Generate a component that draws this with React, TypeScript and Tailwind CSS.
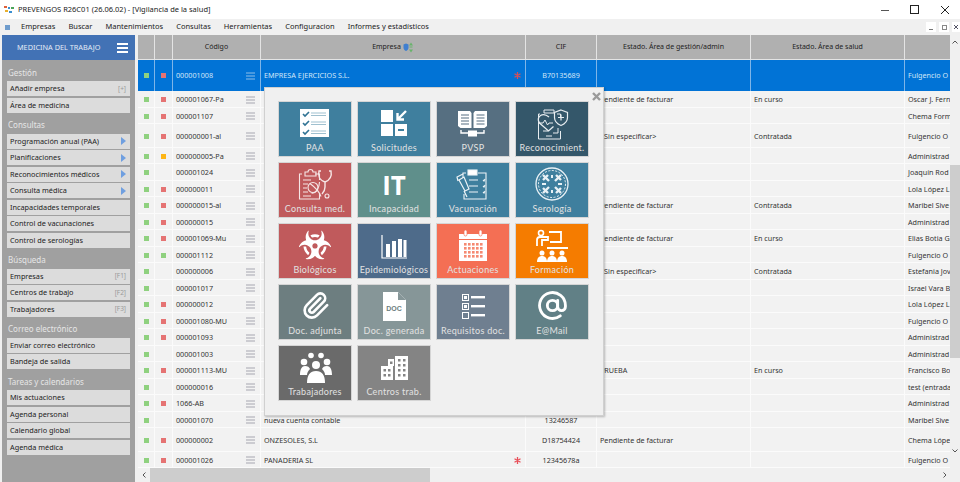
import { AtSign, Paperclip } from 'lucide-react'
import { FaBiohazard } from 'react-icons/fa'
import type { ReactNode } from 'react'

const W = '#ffffff'

const Svg = ({ children }: { children: ReactNode }) => (
  <svg width="72" height="38" viewBox="0 0 72 38" className="block">{children}</svg>
)

const icons: Record<string, ReactNode> = {
  paa: (
    <Svg>
      <rect x="21" y="7" width="29" height="28" fill={W} />
      {[12, 21, 30].map(y => (
        <g key={y}>
          <path d={`M24 ${y}l2 2 4-4`} stroke="#2f7394" strokeWidth="1.6" fill="none" />
          <path d={`M32 ${y - 1}h15M32 ${y + 1.5}h15`} stroke="#9fc0cf" strokeWidth="1" />
        </g>
      ))}
    </Svg>
  ),
  sol: (
    <Svg>
      <rect x="23" y="8" width="12" height="12" fill={W} />
      <rect x="23" y="22" width="12" height="12" fill={W} />
      <rect x="37" y="22" width="12" height="12" fill={W} />
      <rect x="40" y="27" width="6" height="2" fill="#3d7f9e" />
      <path d="M48 9l-8 8M39.5 11v6.5H46" stroke={W} strokeWidth="2.4" fill="none" />
    </Svg>
  ),
  pvsp: (
    <Svg>
      <path d="M21 9h12l1.500 2v15h-11l-2.500-2zM36.500 11l1.500-2h12v15l-2.500 2h-11z" fill={W} />
      <path d="M24 13h8M24 16h8M24 19h8M24 22h8M39.500 13h8M39.500 16h8M39.500 19h8M39.500 22h8" stroke="#566f81" strokeWidth="1.100" />
      <path d="M24 28v3h7M47 28v3h-7" stroke={W} strokeWidth="1.400" fill="none" />
      <rect x="31" y="28.500" width="9" height="6" fill={W} />
    </Svg>
  ),
  rec: (
    <Svg>
      <g stroke="#e8edf0" strokeWidth="1" fill="none">
        <path d="M24 12h-1.500v25h22v-8M41 12h3.500v3" />
        <path d="M28 11v-3h10v3z" />
        <path d="M30 34h6M27 29h5M37 31h5v-5" />
        <path d="M33 15c-3-2.500-6-3-8.500-1.500-2.500 1.700-3 5-1 7.500l9 8 5-4.500" strokeWidth="1.300" />
        <path d="M22 21h5l2-3 2.500 5 1.500-2h4" />
        <path d="M45 8l6.500 2.500v5c0 4-3 6.500-6.500 8-3.500-1.500-6.500-4-6.500-8v-5z" strokeWidth="1.200" />
        <path d="M45 12.500v6M42 15.500h6" strokeWidth="1.200" />
      </g>
    </Svg>
  ),
  con: (
    <Svg>
      <g stroke="#f6e6e6" strokeWidth="1.100" fill="none">
        <path d="M23 11h-2.500v25h20v-6M36 11h4.500v6" />
        <path d="M26 13v-4h3a2 2 0 0 1 5 0h3v4z" />
        <path d="M24 17h8M24 21h5M24 25h4M24 29h5M24 33h8" />
        <circle cx="34" cy="24.500" r="5" />
        <path d="M32.500 30c4 1 8-5 8-11M31 20.500c4 3 9 7 11 13" />
        <circle cx="48" cy="33" r="2" />
        <path d="M42 8h-2c-1 4 0 9 6 11 5-2 7-6 6-11h-2M46 19v5c0 3-1 5-3 7" strokeWidth="1.400" />
      </g>
    </Svg>
  ),
  vac: (
    <Svg>
      <g stroke="#eef4f7" strokeWidth="1.100" fill="none">
        <path d="M29 10h-3v5M41 10h8v26H27v-5" />
        <rect x="31" y="7" width="9" height="5" fill={W} />
        <path d="M32 17h9M46 17l1 1 1-2M32 23h9M46 23l1 1 1-2M32 29h9M46 29l1 1 1-2" />
        <path d="M22 17l5-3 5 12-4 2zM27 28l3 6M21 18l-1-4 6-3" strokeWidth="1.200" />
      </g>
    </Svg>
  ),
  ser: (
    <Svg>
      <g stroke="#e9f1f5" fill="none">
        <circle cx="36" cy="21" r="16" strokeWidth="1.300" />
        <circle cx="36" cy="21" r="13.500" strokeWidth="1" strokeDasharray="2 1.500" />
        <path d="M27 12l6 6M32 12l-5 5M45 12l-6 6M40 12l5 5M27 30l6-6M32 30l-5-5M45 30l-6-6M40 30l5-5" strokeWidth="2.400" />
        <path d="M26 21h4M42 21h4M36 12v3M36 27v3" strokeWidth="2" />
      </g>
    </Svg>
  ),
  epi: (
    <Svg>
      <path d="M24 11v23h25" stroke={W} strokeWidth="1.200" fill="none" />
      <rect x="28" y="20" width="4" height="13" fill={W} />
      <rect x="34" y="17" width="4" height="16" fill={W} />
      <rect x="40" y="15" width="4" height="18" fill={W} />
      <rect x="45.500" y="16" width="3" height="17" fill={W} />
    </Svg>
  ),
  act: (
    <Svg>
      <path d="M22 10h28v27H22z" fill={W} />
      <rect x="22" y="15" width="28" height="1" fill="#f46f54" />
      <rect x="27" y="6" width="3" height="6" rx="1.500" fill={W} stroke="#f46f54" strokeWidth=".7" />
      <rect x="42" y="6" width="3" height="6" rx="1.500" fill={W} stroke="#f46f54" strokeWidth=".7" />
      {[19, 23, 27, 31].map(y =>
        [27, 31, 35, 39, 43].map(x => <rect key={`${x}-${y}`} x={x} y={y} width="2.600" height="2.600" fill="#f58a72" />)
      )}
    </Svg>
  ),
  for: (
    <Svg>
      <g fill="none" stroke={W}>
        <circle cx="25" cy="9" r="2.500" strokeWidth="1.600" />
        <path d="M21 22v-6c0-2 1-3 3-3h8v3h-6v6M33 8h12v10h-11M52 24H31" strokeWidth="1.800" />
      </g>
      {[26, 36, 46].map(x => (
        <g key={x} fill={W}>
          <circle cx={x} cy="29" r="2.500" />
          <path d={`M${x - 5} 38c0-4 2-6 5-6s5 2 5 6z`} />
        </g>
      ))}
    </Svg>
  ),
  gen: (
    <Svg>
      <path d="M25 7h15l8 8v21H25z" fill={W} />
      <path d="M40 7l8 8h-8z" fill="#869698" />
    </Svg>
  ),
  req: (
    <Svg>
      {[9, 18, 27].map((y, i) => (
        <g key={y}>
          <rect x="25.500" y={y + 0.500} width="6" height="6" fill="none" stroke={W} />
          {i < 2 && <rect x="27" y={y + 2} width="3" height="3" fill={W} />}
          <rect x="34" y={y + 2} width="14" height="2.400" fill={W} />
        </g>
      ))}
    </Svg>
  ),
  tra: (
    <Svg>
      <g fill={W}>
        <circle cx="32" cy="9.500" r="2.800" />
        <circle cx="42" cy="9.500" r="2.800" />
        <circle cx="25" cy="16" r="3.300" />
        <circle cx="48" cy="16" r="3.300" />
        <circle cx="37" cy="19" r="4" />
        <path d="M21 29c0-6 2-9 5-9 3 0 4 1 5 3-2 2-3 4-3 6zM53 29c0-6-2-9-5-9-3 0-4 1-5 3 2 2 3 4 3 6zM28 37c0-8 3-12 9-12s9 4 9 12z" />
      </g>
    </Svg>
  ),
  cen: (
    <Svg>
      <rect x="23" y="20" width="12" height="14" fill={W} />
      <rect x="30" y="13" width="6" height="7" fill={W} />
      <rect x="37" y="10" width="13" height="24" fill={W} />
      {[13, 18, 23, 28].map(y => (
        <g key={y} fill="#848484">
          <rect x="40" y={y} width="2.500" height="2.500" />
          <rect x="45" y={y} width="2.500" height="2.500" />
        </g>
      ))}
      {[23, 28].map(y => (
        <g key={y} fill="#848484">
          <rect x="25.500" y={y} width="2.500" height="2.500" />
          <rect x="30" y={y} width="2.500" height="2.500" />
        </g>
      ))}
      <rect x="32" y="15.500" width="2.500" height="2.500" fill="#848484" />
    </Svg>
  ),
}

const tiles = [
  { label: 'PAA', bg: 'bg-[#3f7f9e]', icon: icons.paa },
  { label: 'Solicitudes', bg: 'bg-[#3f7f9e]', icon: icons.sol },
  { label: 'PVSP', bg: 'bg-[#566f81]', icon: icons.pvsp },
  { label: 'Reconocimient.', bg: 'bg-[#34576a]', icon: icons.rec },
  { label: 'Consulta med.', bg: 'bg-[#c05a5c]', icon: icons.con },
  {
    label: 'Incapacidad',
    bg: 'bg-[#5f8f8b]',
    icon: <div className="h-[38px] pt-[7px] text-center text-[26px] leading-[30px] font-bold text-white font-['Open_Sans',sans-serif]">IT</div>,
  },
  { label: 'Vacunación', bg: 'bg-[#3f7f9e]', icon: icons.vac },
  { label: 'Serología', bg: 'bg-[#3f7f9e]', icon: icons.ser },
  {
    label: 'Biológicos',
    bg: 'bg-[#c05a5c]',
    icon: <div className="flex h-[38px] justify-center pt-[5px] text-white"><FaBiohazard size={32} /></div>,
  },
  { label: 'Epidemiológicos', bg: 'bg-[#4e6b8a]', icon: icons.epi },
  { label: 'Actuaciones', bg: 'bg-[#f46f54]', icon: icons.act },
  { label: 'Formación', bg: 'bg-[#f57c00]', icon: icons.for },
  {
    label: 'Doc. adjunta',
    bg: 'bg-[#6d7e80]',
    icon: <div className="flex h-[38px] justify-center pt-[6px] text-white"><Paperclip size={29} strokeWidth={2.2} /></div>,
  },
  {
    label: 'Doc. generada',
    bg: 'bg-[#869698]',
    icon: (
      <div className="relative h-[38px]">
        {icons.gen}
        <span className="absolute top-[20px] left-0 w-full text-center text-[7px] leading-[8px] font-bold text-[#6d7e80] font-['Liberation_Sans',sans-serif]">DOC</span>
      </div>
    ),
  },
  { label: 'Requisitos doc.', bg: 'bg-[#6f7f90]', icon: icons.req },
  {
    label: 'E@Mail',
    bg: 'bg-[#618086]',
    icon: <div className="flex h-[38px] justify-center pt-[5px] text-white"><AtSign size={31} strokeWidth={2.2} /></div>,
  },
  { label: 'Trabajadores', bg: 'bg-[#6a6a6a]', icon: icons.tra },
  { label: 'Centros trab.', bg: 'bg-[#848484]', icon: icons.cen },
]

type Row = { code: string; c2?: string; name?: string; star?: boolean; cif?: string; e1?: string; e2?: string; user: string; tall?: boolean }

const PEND = 'Pendiente de facturar'
const SIN = '<Sin especificar>'
const RED = 'bg-[#e57373]'
const GREEN = 'bg-[#8fd17f]'
const ORANGE = 'bg-[#fdb515]'

const rows: Row[] = [
  { code: '000001067-Pa', c2: RED, e1: PEND, e2: 'En curso', user: 'Oscar J. Fern' },
  { code: '000001107', c2: RED, user: 'Chema Form' },
  { code: '000000001-al', c2: RED, e1: SIN, e2: 'Contratada', user: 'Fulgencio O', tall: true },
  { code: '000000005-Pa', c2: ORANGE, user: 'Administrad' },
  { code: '000001024', user: 'Joaquín Rod' },
  { code: '000000011', c2: RED, user: 'Lola López L' },
  { code: '000000015-al', c2: RED, e1: PEND, e2: 'Contratada', user: 'Maribel Sive' },
  { code: '000000015', c2: RED, user: 'Administrad' },
  { code: '000001069-Mu', c2: RED, e1: PEND, e2: 'En curso', user: 'Elias Botia G' },
  { code: '000001112', c2: GREEN, user: 'Fulgencio O' },
  { code: '000000006', e1: SIN, e2: 'Contratada', user: 'Estefania Jov' },
  { code: '000001017', user: 'Israel Vara B' },
  { code: '000000012', c2: RED, user: 'Lola López L' },
  { code: '000001080-MU', c2: RED, user: 'Fulgencio O' },
  { code: '000001093', c2: RED, user: 'Administrad' },
  { code: '000001003', user: 'Administrad' },
  { code: '000001113-MU', c2: RED, e1: 'PRUEBA', e2: 'En curso', user: 'Francisco Bo' },
  { code: '000000016', user: 'test (entrada' },
  { code: '1066-AB', c2: RED, user: 'Administrad' },
  { code: '000001070', name: 'nueva cuenta contable', cif: '13246587', user: 'Maribel Sive' },
  { code: '000000002', c2: RED, name: 'ONZESOLES, S.L', cif: 'D18754424', e1: PEND, user: 'Chema Lópe', tall: true },
  { code: '000001026', c2: RED, name: 'PANADERIA SL', star: true, cif: '12345678a', user: 'Fulgencio O' },
]

const Lines = ({ color }: { color: string }) => (
  <svg width="9" height="8" viewBox="0 0 9 8" className="shrink-0">
    <path d="M0 1h9M0 4h9M0 7h9" stroke={color} strokeWidth="1" />
  </svg>
)

const Star = ({ color }: { color: string }) => (
  <svg width="7" height="7" viewBox="0 0 7 7" className="shrink-0">
    <path d="M3.500 0v7M0.500 1.700l6 3.600M6.500 1.700l-6 3.600" stroke={color} strokeWidth="1.300" />
  </svg>
)

const Sq = ({ color }: { color?: string }) => (color ? <div className={`h-[5px] w-[5px] ${color}`} /> : null)

const sideGroups = [
  { title: 'Gestión', items: [['Añadir empresa', '[+]'], ['Área de medicina']] },
  {
    title: 'Consultas',
    items: [['Programación anual (PAA)', '>'], ['Planificaciones', '>'], ['Reconocimientos médicos', '>'], ['Consulta médica', '>'], ['Incapacidades temporales'], ['Control de vacunaciones'], ['Control de serologías']],
  },
  { title: 'Búsqueda', items: [['Empresas', '[F1]'], ['Centros de trabajo', '[F2]'], ['Trabajadores', '[F3]']] },
  { title: 'Correo electrónico', items: [['Enviar correo electrónico'], ['Bandeja de salida']] },
  { title: 'Tareas y calendarios', items: [['Mis actuaciones'], ['Agenda personal'], ['Calendario global'], ['Agenda médica']] },
]

function Sidebar() {
  return (
    <aside className="ml-[2px] w-[133px] shrink-0 bg-[#a0a0a0]">
      <div className="flex h-[25px] items-center justify-between bg-[#4272b5] pr-[7px] pl-[15px] text-[7.300px] whitespace-nowrap text-[#e4ecf6]">
        MEDICINA DEL TRABAJO
        <svg width="11" height="10" viewBox="0 0 11 10"><path d="M0 1h11M0 5h11M0 9h11" stroke="#ffffff" strokeWidth="2" /></svg>
      </div>
      {sideGroups.map(g => (
        <section key={g.title} className="px-[5px]">
          <h3 className="mt-[5.5px] mb-[2.5px] h-[13px] pl-[1px] text-[8px] leading-[13px] text-[#e6e6e6]">{g.title}</h3>
          <div className="flex flex-col gap-[1.5px]">
            {g.items.map(([label, hint]) => (
              <div key={label} className="flex h-[15px] items-center justify-between bg-[#dcdcdc] pr-[4px] pl-[3px] text-[7.300px] text-[#222]">
                {label}
                {hint === '>' ? (
                  <svg width="5" height="8" viewBox="0 0 5 8"><path d="M0 0l5 4-5 4z" fill="#6f9fe0" /></svg>
                ) : hint ? (
                  <span className="text-[6.500px] text-[#999]">{hint}</span>
                ) : null}
              </div>
            ))}
          </div>
        </section>
      ))}
    </aside>
  )
}

const HeadCell = ({ w, children }: { w: string; children?: ReactNode }) => (
  <div className={`flex h-full shrink-0 items-center justify-center border-r border-[#e4e4e4] text-[7px] text-[#222] ${w}`}>{children}</div>
)

function Table() {
  return (
    <div className="relative ml-[3px] flex min-w-0 flex-1 flex-col">
      <div className="flex min-h-0 flex-1">
        <div className="min-w-0 flex-1 overflow-hidden">
          <div className="flex h-[25px] w-[812px] border-b border-[#e4e4e4] bg-[#b0b0b0]">
            <HeadCell w="w-[17px]" />
            <HeadCell w="w-[18px]" />
            <HeadCell w="w-[88px]">Código</HeadCell>
            <HeadCell w="w-[265px]">
              Empresa
              <svg width="11" height="11" viewBox="0 0 11 11" className="ml-[2px]">
                <path d="M0.500 2.500l2.500-1 2.500 1v3c0 2-1.200 3-2.500 3.500-1.300-.5-2.500-1.500-2.500-3.500z" fill="#3f7fd0" />
                <path d="M8 0.500l2 3H6zM6.500 4.500h3v1h-3zM8 10.500l-2-3h4z" fill="#68b36b" />
              </svg>
            </HeadCell>
            <HeadCell w="w-[71px]">CIF</HeadCell>
            <HeadCell w="w-[154px]">Estado. Área de gestión/admin</HeadCell>
            <HeadCell w="w-[154px]">Estado. Área de salud</HeadCell>
            <div className="flex-1" />
          </div>
          <div className="flex h-[31px] w-[812px] items-center bg-[#0173d6] text-[7.200px] text-[#d3e6f8]">
            <div className="flex h-full w-[17px] shrink-0 items-center justify-center border-r border-[#7fb5e8]"><Sq color={GREEN} /></div>
            <div className="flex h-full w-[18px] shrink-0 items-center justify-center border-r border-[#7fb5e8]"><Sq color={RED} /></div>
            <div className="flex h-full w-[88px] shrink-0 items-center justify-between border-r border-[#7fb5e8] pr-[5px] pl-[3px]">000001008<Lines color="#8fbfe8" /></div>
            <div className="flex h-full w-[265px] shrink-0 items-center justify-between border-r border-[#7fb5e8] pr-[4px] pl-[3px]">EMPRESA EJERCICIOS S.L.<Star color="#d4505a" /></div>
            <div className="flex h-full w-[71px] shrink-0 items-center justify-center border-r border-[#7fb5e8]">B70135689</div>
            <div className="h-full w-[154px] shrink-0 border-r border-[#7fb5e8]" />
            <div className="h-full w-[154px] shrink-0 border-r border-[#7fb5e8]" />
            <div className="min-w-0 flex-1 overflow-hidden pl-[3px] whitespace-nowrap">Fulgencio O</div>
          </div>
          {rows.map(r => (
            <div key={r.code + r.user} className={`flex w-[812px] items-center border-b border-[#fbfbfb] bg-[#f2f2f2] text-[7.200px] text-[#333] ${r.tall ? 'h-[23.5px]' : 'h-[16.5px]'}`}>
              <div className="flex h-full w-[17px] shrink-0 items-center justify-center border-r border-[#fbfbfb] pt-[2px]"><Sq color={GREEN} /></div>
              <div className="flex h-full w-[18px] shrink-0 items-center justify-center border-r border-[#fbfbfb] pt-[2px]"><Sq color={r.c2} /></div>
              <div className="flex h-full w-[88px] shrink-0 items-center justify-between border-r border-[#fbfbfb] pt-[2px] pr-[5px] pl-[3px]">{r.code}<Lines color="#a6a6b0" /></div>
              <div className="flex h-full w-[265px] shrink-0 items-center justify-between border-r border-[#fbfbfb] pt-[2px] pr-[4px] pl-[3px]">{r.name}{r.star && <Star color="#e8505a" />}</div>
              <div className="flex h-full w-[71px] shrink-0 items-center justify-center border-r border-[#fbfbfb] pt-[2px]">{r.cif}</div>
              <div className="flex h-full w-[154px] shrink-0 items-center border-r border-[#fbfbfb] pt-[2px] pl-[3px]">{r.e1}</div>
              <div className="flex h-full w-[154px] shrink-0 items-center border-r border-[#fbfbfb] pt-[2px] pl-[3px]">{r.e2}</div>
              <div className="min-w-0 flex-1 overflow-hidden pt-[2px] pl-[3px] whitespace-nowrap">{r.user}</div>
            </div>
          ))}
        </div>
        {/* vertical scrollbar */}
        <div className="flex w-[10px] shrink-0 flex-col bg-[#f0f0f0]">
          <div className="flex h-[130px] items-start justify-center pt-[5px]">
            <svg width="6" height="4" viewBox="0 0 6 4"><path d="M0.500 3.500L3 1l2.500 2.500" stroke="#555" fill="none" /></svg>
          </div>
          <div className="h-[193px] bg-[#cdcdcd]" />
          <div className="flex flex-1 items-end justify-center pb-[15px]">
            <svg width="6" height="4" viewBox="0 0 6 4"><path d="M0.500 0.500L3 3l2.500-2.500" stroke="#555" fill="none" /></svg>
          </div>
        </div>
      </div>
      {/* horizontal scrollbar */}
      <div className="flex h-[14px] shrink-0 items-center bg-[#f0f0f0]">
        <div className="flex w-[12px] justify-center">
          <svg width="4" height="6" viewBox="0 0 4 6"><path d="M3.500 0.500L1 3l2.500 2.500" stroke="#555" fill="none" /></svg>
        </div>
        <div className="h-full w-[280px] bg-[#cdcdcd]" />
        <div className="flex flex-1 justify-end pr-[13px]">
          <svg width="4" height="6" viewBox="0 0 4 6"><path d="M0.500 0.500L3 3 0.500 5.500" stroke="#555" fill="none" /></svg>
        </div>
      </div>
    </div>
  )
}

function TileMenu() {
  return (
    <div className="absolute top-[87px] left-[264px] h-[329px] w-[340px] border border-[#d0d0d0] bg-[#f0f0f0] pt-[13px] pl-[13px] shadow-[1px_1px_2px_rgba(0,0,0,0.25)] font-['Lato',sans-serif]">
      <svg width="9" height="9" viewBox="0 0 9 9" className="absolute top-[4px] right-[2px]">
        <path d="M1 1l7 7M8 1L1 8" stroke="#9a9a9a" strokeWidth="2.400" />
      </svg>
      <div className="grid w-[315px] grid-cols-[74px_74px_74px_74px] gap-x-[5px] gap-y-[5px]">
        {tiles.map(t => (
          <div key={t.label} className={`flex h-[56px] flex-col border border-[#d5d5d5] ${t.bg}`}>
            {t.icon}
            <div className="mt-[2px] text-center text-[9px] leading-[12px] tracking-[0.3px] whitespace-nowrap text-[#e2e2e2]">{t.label}</div>
          </div>
        ))}
      </div>
    </div>
  )
}

const menu = ['Empresas', 'Buscar', 'Mantenimientos', 'Consultas', 'Herramientas', 'Configuracion', 'Informes y estadísticos']

export default function App() {
  return (
    <div className="relative flex h-[482px] w-[960px] flex-col overflow-hidden bg-[#f0f0f0] font-['Noto_Sans',sans-serif]">
      <div className="flex h-[19px] shrink-0 items-center justify-between bg-white pl-[4px] text-[7.500px] text-[#222]">
        <div className="flex items-center gap-[4px]">
          <svg width="10" height="8" viewBox="0 0 10 8">
            <rect x="0" y="0" width="3" height="2" fill="#e0603a" />
            <rect x="4" y="1" width="2" height="2" fill="#3a8fd0" />
            <rect x="7" y="1" width="3" height="2" fill="#4aa55a" />
            <rect x="1" y="4" width="3" height="2" fill="#e8b030" />
            <rect x="5" y="5" width="3" height="2" fill="#3a8fd0" />
          </svg>
          PREVENGOS R26C01 (26.06.02) - [Vigilancia de la salud]
        </div>
        <div className="flex items-center">
          <svg width="30" height="12" viewBox="0 0 30 12"><path d="M11 6.500h8" stroke="#555" /></svg>
          <svg width="30" height="12" viewBox="0 0 30 12"><rect x="10.500" y="1.500" width="8" height="8" fill="none" stroke="#222" /></svg>
          <svg width="30" height="12" viewBox="0 0 30 12"><path d="M11 2l8 8M19 2l-8 8" stroke="#222" /></svg>
        </div>
      </div>
      <div className="flex h-[16px] shrink-0 items-center justify-between pl-[5px] text-[7.500px] text-[#222]">
        <div className="flex items-center">
          <div className="mr-[11px] h-[5px] w-[5px] bg-[#6f9ccc]" />
          <div className="flex gap-[13px]">{menu.map(m => <span key={m}>{m}</span>)}</div>
        </div>
        <div className="flex gap-[3px]">
          <div className="flex h-[10px] w-[10px] items-end justify-center bg-white pb-[2px]"><div className="h-[1px] w-[4px] bg-[#777]" /></div>
          <div className="flex h-[10px] w-[10px] items-center justify-center bg-white"><div className="h-[5px] w-[5px] border border-[#888]" /></div>
          <div className="flex h-[10px] w-[8px] items-center justify-center bg-white">
            <svg width="6" height="6" viewBox="0 0 6 6"><path d="M1 1l4 4M5 1L1 5" stroke="#556" /></svg>
          </div>
        </div>
      </div>
      <div className="flex min-h-0 flex-1">
        <Sidebar />
        <Table />
      </div>
      <TileMenu />
    </div>
  )
}
